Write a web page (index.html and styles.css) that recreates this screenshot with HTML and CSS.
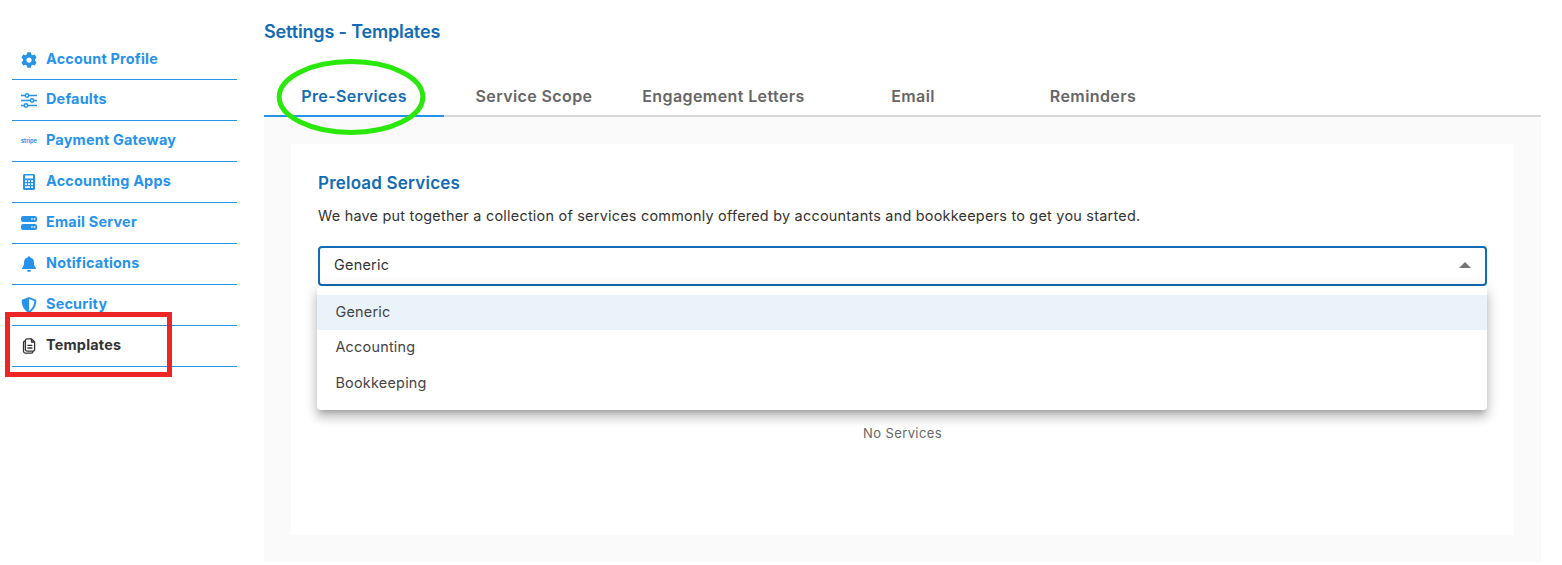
FILE: index.html
```html
<!DOCTYPE html>
<html lang="en">
<head>
<meta charset="utf-8">
<title>Settings - Templates</title>
<link rel="stylesheet" href="styles.css">
</head>
<body>
<div class="layout">
  <nav class="sidebar">
    <a class="nav-item first"><svg class="icon" viewBox="0 0 24 24"><path fill="currentColor" fill-rule="evenodd" d="M9.300 .5h5.400l.7 3.400 1.900 1.100 3.400-1.100 2.700 4.800-2.500 2.300v2.100l2.500 2.300-2.700 4.800-3.400-1.100-1.900 1.100-.7 3.300H9.300l-.7-3.300-1.900-1.100-3.400 1.100-2.700-4.800 2.500-2.300v-2.100L.6 8.700l2.700-4.800L6.700 5l1.900-1.100zM12 8.200a3.900 3.900 0 1 0 0 7.800 3.900 3.900 0 0 0 0-7.800z"/></svg>Account Profile</a>
    <a class="nav-item"><svg class="icon low" viewBox="0 0 16 16"><g fill="none" stroke="currentColor" stroke-width="1.500"><path d="M0 2.500h4M8 2.500h8M0 7.500h9M13 7.500h3M0 12.500h3M7 12.500h9"/><circle cx="6" cy="2.500" r="1.700"/><circle cx="11" cy="7.500" r="1.700"/><circle cx="5" cy="12.500" r="1.700"/></g></svg>Defaults</a>
    <a class="nav-item"><svg class="icon low" viewBox="0 0 16 16"><text class="stripe" x="0" y="9.200" textLength="15.800" lengthAdjust="spacingAndGlyphs">stripe</text></svg>Payment Gateway</a>
    <a class="nav-item"><svg class="icon" viewBox="0 0 16 16"><path fill="currentColor" fill-rule="evenodd" d="M3.500 0h9A1.500 1.500 0 0 1 14 1.500v13a1.500 1.500 0 0 1-1.500 1.500h-9A1.500 1.500 0 0 1 2 14.500v-13A1.500 1.500 0 0 1 3.500 0zM4 1.500v3h8v-3zM4 6.200v1.800h2V6.200zm3 0v1.800h2V6.200zm3 0v1.800h2V6.200zM4 9.200V11h2V9.200zm3 0V11h2V9.200zm3 0V11h2V9.200zM4 12.300v1.700h5v-1.700zm6 0v1.700h2v-1.700z"/></svg>Accounting Apps</a>
    <a class="nav-item"><svg class="icon" viewBox="0 0 16 16"><path fill="currentColor" fill-rule="evenodd" d="M2 1h12a2 2 0 0 1 2 2v2a2 2 0 0 1-2 2H2a2 2 0 0 1-2-2V3a2 2 0 0 1 2-2zm8.200 2.200v1.500h1.500V3.200zm2.600 0v1.500h1.500V3.200zM2 9h12a2 2 0 0 1 2 2v2a2 2 0 0 1-2 2H2a2 2 0 0 1-2-2v-2a2 2 0 0 1 2-2zm8.200 2.200v1.500h1.500v-1.500zm2.600 0v1.500h1.500v-1.500z"/></svg>Email Server</a>
    <a class="nav-item"><svg class="icon" viewBox="0 0 16 16"><path fill="currentColor" d="M7 1.200a1 1 0 0 1 2 0c2.500.5 4 2.500 4 5 0 3 .5 4.200 2 5.800v1H1v-1c1.500-1.600 2-2.800 2-5.800 0-2.500 1.500-4.500 4-5zM6 14h4a2 2 0 0 1-4 0z"/></svg>Notifications</a>
    <a class="nav-item"><svg class="icon" viewBox="0 0 16 16"><path fill="currentColor" fill-rule="evenodd" d="M8 0c2 .9 4 1.700 6.500 2.400.5.200.8.600.8 1.100 0 5.400-2.500 9.900-7.300 12.500C3.200 13.400.7 8.900.7 3.500c0-.5.300-.9.800-1.100C4 1.700 6 .9 8 0zm0 2v11.900c3.200-2.100 5.200-5.500 5.300-9.900z"/></svg>Security</a>
    <a class="nav-item active"><svg class="icon" viewBox="0 0 16 16"><g fill="none" stroke="currentColor" stroke-width="1.300" stroke-linejoin="round" stroke-linecap="round"><path d="M6 .9h4.600L13.600 4v7.500a1.600 1.600 0 0 1-1.600 1.600H6a1.600 1.600 0 0 1-1.600-1.600v-9A1.600 1.600 0 0 1 6 .9zM10.500 1v3h3M4.200 3a1.700 1.700 0 0 0-1.700 1.700v8.400a2.100 2.100 0 0 0 2.100 2.100h5.500a2 2 0 0 0 1.900-2M6.900 7.300h4M6.900 10h4"/></g></svg>Templates</a>
  </nav>
  <main class="main">
    <h1 class="title">Settings - Templates</h1>
    <div class="tabs">
      <div class="tab selected">Pre-Services</div>
      <div class="tab">Service Scope</div>
      <div class="tab wide">Engagement Letters</div>
      <div class="tab">Email</div>
      <div class="tab">Reminders</div>
    </div>
    <section class="panel">
      <div class="card">
        <h2 class="heading">Preload Services</h2>
        <p class="description">We have put together a collection of services commonly offered by accountants and bookkeepers to get you started.</p>
        <div class="select">
          <span>Generic</span><i class="arrow"></i>
          <div class="menu">
            <div class="option chosen">Generic</div>
            <div class="option">Accounting</div>
            <div class="option">Bookkeeping</div>
          </div>
        </div>
        <p class="empty">No Services</p>
      </div>
    </section>
  </main>
</div>
<div class="mark-box"></div>
<svg class="mark-ellipse" viewBox="0 0 150 78"><ellipse cx="75" cy="39" rx="71.800" ry="35.400"/></svg>
</body>
</html>
```
FILE: styles.css
```css
* { box-sizing: border-box; }
body { margin: 0; background: #fff; font-family: Inter, sans-serif; position: relative; height: 565px; overflow: hidden; }
.layout { display: flex; height: 565px; }
.sidebar { width: 225px; margin: 39px 27px 0 12px; flex: none; }
.nav-item { display: flex; align-items: center; height: 41px; padding: 0 0 2px 9px; border-bottom: 1px solid #2693eb; color: #2693eb; font-size: 14.4px; line-height: 18px; font-weight: 700; letter-spacing: 0.22px; }
.nav-item.first { padding-bottom: 1px; }
.icon { width: 16px; height: 16px; margin: 2px 9px 0 0; flex: none; overflow: visible; }
.nav-item.first .icon { margin-top: 2px; }
.icon.low { margin-top: 3.500px; }
.stripe { font-size: 6.5px; font-weight: 700; letter-spacing: 0; fill: currentColor; }
.nav-item.active { color: #333; }
.main { width: 1277px; }
.title { margin: 0; padding-top: 20px; height: 77px; font-size: 18px; line-height: 24px; font-weight: 600; color: #126bb5; letter-spacing: -0.15px; }
.tabs { display: flex; height: 40px; border-bottom: 2px solid #d8d8d8; }
.tab { width: 180px; height: 40px; line-height: 39px; text-align: center; font-size: 16px; font-weight: 600; letter-spacing: 0.4px; color: #666; }
.tab.wide { width: 199px; }
.tab.selected { color: #126bb5; border-bottom: 2px solid #2693eb; }
.panel { background: #fafafa; height: 445px; padding: 27px; }
.card { background: #fff; height: 391px; padding: 27px 27px 0; }
.heading { margin: 0; font-size: 17px; line-height: 24px; font-weight: 600; color: #126bb5; letter-spacing: 0.2px; }
.description { margin: 9px 0 0; font-size: 14.4px; line-height: 24px; color: #333; letter-spacing: 0.25px; }
.select { position: relative; display: flex; align-items: center; justify-content: space-between; height: 40px; margin-top: 18px; padding: 0 14px 3px 14px; border: 2px solid #126bb5; border-radius: 4px; font-size: 14.4px; line-height: 18px; letter-spacing: 0.25px; color: #333; }
.arrow { border: 6px solid transparent; border-top: 0; border-bottom-color: #757575; margin-top: 1px; }
.menu { position: absolute; left: -3px; right: -2px; top: 38px; height: 124px; padding-top: 9px; background: #fff; border-radius: 4px; box-shadow: 0 5px 5px -3px rgba(0,0,0,.2), 0 8px 10px 1px rgba(0,0,0,.14), 0 3px 14px 2px rgba(0,0,0,.12); }
.option { height: 35.500px; line-height: 34px; padding-left: 18.400px; color: #444; }
.option.chosen { height: 35px; background: #ebf3fa; }
.empty { margin: 137px 0 0; text-align: center; font-size: 13px; line-height: 20px; color: #666; letter-spacing: 0.4px; }
.mark-box { position: absolute; left: 5px; top: 312px; width: 167px; height: 65px; border: 5px solid rgba(235,28,28,.96); }
.mark-ellipse { position: absolute; left: 276.400px; top: 57.700px; width: 150px; height: 78px; fill: none; stroke: #2ae80c; stroke-width: 5px; }
```
